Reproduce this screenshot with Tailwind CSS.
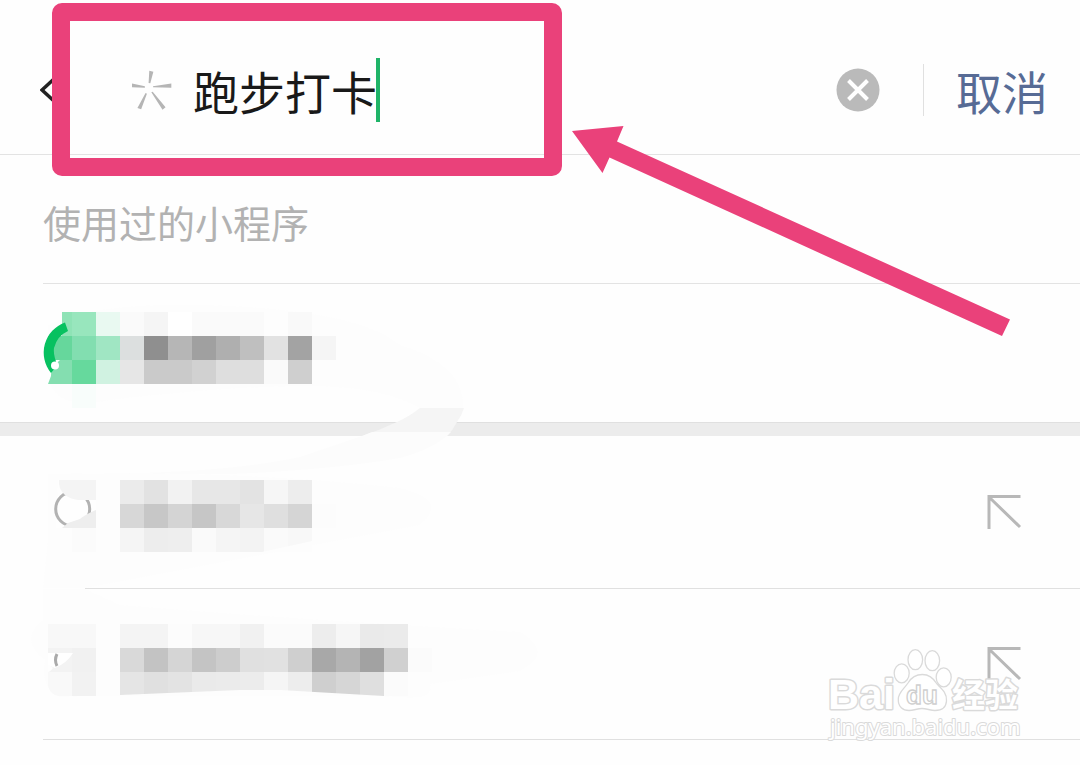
<!DOCTYPE html>
<html lang="zh-CN">

<head>
    <meta charset="UTF-8" />
    <meta name="viewport" content="width=device-width, initial-scale=1.0" />
    <title>跑步打卡</title>
    <script src="https://cdn.jsdelivr.net/npm/@tailwindcss/browser@4"></script>
</head>

<body class="relative min-h-screen overflow-x-hidden bg-[#fefefe] font-['Noto_Sans_CJK_SC',sans-serif]">
    <!-- Search bar -->
    <header class="flex h-[155px] items-center border-b border-[#e3e3e3] pt-[26px] pl-10">
        <a href="#" aria-label="返回" class="w-[92px]">
            <svg class="h-7 w-4" viewBox="0 0 16 28" fill="none" stroke="#222" stroke-width="3.500">
                <path d="M15 2 2 14l13 12" />
            </svg>
        </a>
        <svg class="size-10 shrink-0" viewBox="396 208 118 118" fill="#b5b5b5">
            <path d="M396 248v11l38 1v-4zM447 210l12 3-9 34-5-1zM512 248v12l-54-1v-3zM436 276l4 2-17 46-11-4zM453 274l4-2 38 46-9 7z" />
        </svg>
        <form class="flex flex-1 items-center pl-[21px]">
            <input id="keyword" type="text" value="跑步打卡" aria-label="搜索"
                class="h-16 w-[183px] bg-transparent text-[46px] text-[#191919] outline-none" />
            <span class="h-16 w-1 bg-[#1fb468]"></span>
            <button type="reset" aria-label="清除" class="mr-[43px] ml-auto">
                <svg class="size-11" viewBox="0 0 44 44">
                    <circle cx="22" cy="22" r="21.500" fill="#bababa" />
                    <path d="m12.500 12.500 19 19m0-19-19 19" stroke="#fff" stroke-width="4" />
                </svg>
            </button>
            <span class="h-[52px] w-px bg-[#e0e0e0]"></span>
            <button type="button" class="mr-8 ml-8 text-[46px] leading-[64px] text-[#576b95]">取消</button>
        </form>
    </header>

    <main>
        <!-- Used mini programs -->
        <section>
            <h2 class="ml-[43px] flex h-[129px] items-center border-b border-[#e3e3e3] pt-1 text-[38px] font-normal text-[#b2b2b2]">
                使用过的小程序</h2>
            <a href="#" aria-label="小程序" class="block h-[138px] pl-[43px]">
                <svg class="h-[138px] w-[437px]" viewBox="43 284 437 138">
                    <path d="M48 325Q100 300 230 306T400 345Q465 365 463 408H420Q380 385 300 386T110 400Q60 410 50 384z" fill="#fdfdfd" />
                    <g data-mosaic="used" shape-rendering="crispEdges"></g>
                    <path d="M48 360H60Q50 368 51 376L48 384z" fill="#fefefe" />
                    <path d="M65 322.500A32 32 0 0 0 51 373Q53 370 58 366Q53 356 54 348Q57 336 68 331z" fill="#07c160" />
                    <circle cx="55" cy="365.500" r="4" fill="#fff" />
                    <path d="M397 422Q410 416 420 408h44q-2 7-7 14z" fill="#f5f5f5" />
                </svg>
            </a>
        </section>

        <div class="h-[14px] border-t border-[#e0e0e0] bg-[#ececec]">
            <svg class="-mt-px h-[14px] w-[480px]" viewBox="0 422 480 14">
                <path d="M397 422h60q-4 8-10 14h-85q18-6 35-14z" fill="#f5f5f5" />
                <path d="M372 432h79l-4 4h-85z" fill="#fcfcfc" />
            </svg>
        </div>

        <!-- Suggestions -->
        <ul>
            <li>
                <a href="#" aria-label="搜索建议" class="flex h-[152px] items-center justify-between pr-[58px] pl-[43px]">
                    <svg class="h-[152px] w-[437px]" viewBox="43 436 437 152">
                        <path d="M362 436h85Q430 450 400 458Q330 470 230 474H100Q230 472 300 457z" fill="#fcfcfc" />
                        <path d="M48 540V474Q240 470 400 488Q450 500 420 525L340 540 85 588H43z" fill="#fdfdfd" />
                        <g data-mosaic="first" shape-rendering="crispEdges"></g>
                        <path d="M262 552 312 541v11z" fill="#fdfdfd" />
                        <path d="M58 480h38v48H56z" fill="#fefefe" />
                        <circle cx="72.700" cy="509" r="17" fill="none" stroke="#b2b2b2" stroke-width="3" />
                        <path d="M59 480h37v20H78Q70 499 65 495Q58 489 59 480z" fill="#f4f4f4" />
                        <path d="M62 528 68 523 80 519Q86 514 96 510v18z" fill="#eee" />
                    </svg>
                    <svg class="size-9" viewBox="0 0 36 36" fill="none" stroke="#b8b8b8" stroke-width="3">
                        <path d="M34.500 2.500H3V35M4 4l30 29" />
                    </svg>
                </a>
                <div class="ml-[85px] h-px bg-[#e0e0e0]"></div>
            </li>
            <li>
                <a href="#" aria-label="搜索建议" class="flex h-[150px] items-center justify-between pr-[58px] pl-[25px]">
                    <svg class="h-[150px] w-[520px]" viewBox="25 589 520 150">
                        <path d="M43 589H85L120 605Q240 615 400 625L520 632Q555 652 520 671L430 684Q435 700 400 697L240 690 60 697Q40 690 45 660Q18 640 43 620z" fill="#fdfdfd" />
                        <g data-mosaic="second" shape-rendering="crispEdges"></g>
                        <path d="M120 696V695L240 690H280L384 696z" fill="#fdfdfd" />
                        <path d="M48 672Q50 672 53 668L48 664zM48 696V686Q50 694 58 696z" fill="#fefefe" />
                        <path d="M48 653h25q-6 10-18 15l-7-3z" fill="#fff" />
                        <path d="M57 654q-3 6 0 12" fill="none" stroke="#aaa" stroke-width="3" />
                    </svg>
                    <svg class="size-9" viewBox="0 0 36 36" fill="none" stroke="#b8b8b8" stroke-width="3">
                        <path d="M34.500 2.500H3V35M4 4l30 29" />
                    </svg>
                </a>
                <div class="ml-[43px] h-px bg-[#e0e0e0]"></div>
            </li>
        </ul>
    </main>

    <!-- Highlight frame and pointer -->
    <div class="pointer-events-none absolute top-[3px] left-[52px] h-[173px] w-[510px] rounded-[10px] border-[18px] border-[#ea417a]"></div>
    <svg class="pointer-events-none absolute top-[120px] left-[565px] h-[220px] w-[450px]" viewBox="565 120 450 220" fill="#ea417a">
        <path d="M572 131 623.500 126 617 141.500 1010 319.500 1002 336 609.500 157.500 602.500 173z" />
    </svg>

    <!-- Watermark -->
    <svg class="pointer-events-none absolute top-[645px] right-[50px] h-[100px] w-[210px]" viewBox="820 645 210 100"
        fill="#fff" stroke="#dadada" stroke-width="1.300">
        <g font-family="Liberation Sans, sans-serif" font-weight="bold" paint-order="stroke" stroke-linejoin="round">
            <text x="828" y="709" font-size="43" stroke-width="3">Bai</text>
            <text x="952" y="707" font-size="33" stroke-width="3" font-family="Noto Sans CJK SC, sans-serif">经验</text>
        </g>
        <ellipse cx="901.700" cy="673.300" rx="7.500" ry="9.500" />
        <ellipse cx="915.300" cy="659.700" rx="7.300" ry="10" />
        <ellipse cx="932.300" cy="660.700" rx="7.300" ry="10" />
        <ellipse cx="943.700" cy="677.300" rx="7.500" ry="9.500" />
        <path d="M922.300 674.500C930 674.500 934 679 937 684C942 689 947 693 946.500 701C946 708 941 710.500 935 710.500C930 710.500 927 708.500 922 708.500C917 708.500 914 710.500 909 710.500C903 710.500 898 707 898.300 699C898.500 692 904 689 908 683C911 678 915 674.500 922.300 674.500z" />
        <text x="906" y="704" font-size="26" font-weight="bold" font-family="Liberation Sans, sans-serif" stroke="#cfcfcf">du</text>
        <text x="830" y="735" font-size="22" font-family="Noto Sans, sans-serif" stroke-width="2" paint-order="stroke" stroke-linejoin="round">jingyan.baidu.com</text>
    </svg>

    <script>
        // each row: x, y, then one colour for every 24px cell
        const mosaics = {
            used: [
                [72, 312, '98e6bd e9f9f1 fafafa f5f5f5 ffffff fafafa fafafa fafafa fdfdfd f9f9f9'],
                [48, 336, '66d79c 82deb0 a0e6c3 dcdfdf 8f8f8f b6b6b6 a0a0a0 afafaf bfbfbf e2e2e2 a3a3a3 f5f5f5'],
                [48, 360, '84deb0 66d99d d0f2e1 e6e6e6 cacaca cacaca d1d1d1 dedede dedede fafafa cfcfcf'],
                [72, 384, 'f8fdfb']
            ],
            first: [
                [120, 480, 'ebebeb e2e2e2 f2f2f2 e7e7e7 e7e7e7 e3e3e3 f6f6f6 ededed'],
                [120, 504, 'd7d7d7 c7c7c7 d4d4d4 c6c6c6 d8d8d8 e6e6e6 dfdfdf d5d5d5 fcfcfc'],
                [72, 528, 'fbfbfb fdfdfd f5f5f5 ededed eeeeee fafafa f5f5f5 f3f3f3 fafafa f8f8f8']
            ],
            second: [
                [48, 624, 'f8f8f8 f8f8f8 fdfdfd f4f4f4 f4f4f4 fcfcfc f7f7f7 f7f7f7 f1f1f1 fbfbfb fbfbfb ededed f6f6f6 eaeaea ebebeb'],
                [48, 648, 'f3f3f3 f1f1f1 fdfdfd d9d9d9 c3c3c3 d5d5d5 c4c4c4 cdcdcd e0e0e0 e1e1e1 cfcfcf a8a8a8 b4b4b4 a2a2a2 d0d0d0 fbfbfb'],
                [48, 672, 'f9f9f9 f2f2f2 fdfdfd e5e5e5 e0e0e0 e3e3e3 eaeaea ebebeb ececec f5f5f5 ededed cfcfcf d6d6d6 dfdfdf fbfbfb']
            ]
        };
        for (const group of document.querySelectorAll('[data-mosaic]')) {
            let html = group.dataset.mosaic === 'used' ? '<rect x="62" y="312" width="10" height="24" fill="#8fe3b6"/>' : '';
            for (const [x, y, colors] of mosaics[group.dataset.mosaic]) {
                colors.split(' ').forEach((color, i) => {
                    html += `<rect x="${x + i * 24}" y="${y}" width="24" height="24" fill="#${color}"/>`;
                });
            }
            group.innerHTML = html;
        }
    </script>
</body>

</html>
